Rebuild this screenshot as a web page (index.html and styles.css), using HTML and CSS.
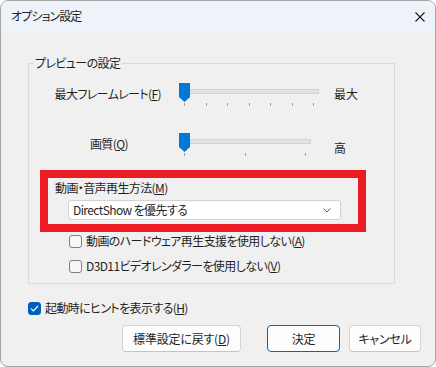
FILE: index.html
```html
<!DOCTYPE html>
<html lang="ja">
<head>
    <meta charset="UTF-8">
    <title>オプション設定</title>
    <link rel="stylesheet" href="styles.css">
</head>
<body>
    <div class="window">
        <div class="titlebar">
            <span class="title">オプション設定</span>
            <svg class="close" width="10" height="10" viewBox="0 0 10 10">
                <path d="M0.5 0.5 L9.5 9.5 M9.5 0.5 L0.5 9.5" stroke="#1b1b1b" stroke-width="1.1" fill="none"/>
            </svg>
        </div>

        <div class="content">
            <div class="group">
                <span class="group-title">プレビューの設定</span>

                <div class="slider-row">
                    <div class="slider-label">最大フレームレート(<u>F</u>)</div>
                    <div class="slider">
                        <div class="track track-long"></div>
                        <svg class="thumb" width="11" height="19" viewBox="0 0 11 19">
                            <path d="M0 0 H11 V14 L5.5 19 L0 14 Z" fill="#0078d7"/>
                        </svg>
                        <div class="ticks ticks-long">
                            <i></i><i></i><i></i><i></i><i></i><i></i><i></i>
                        </div>
                    </div>
                    <div class="slider-end">最大</div>
                </div>

                <div class="slider-row">
                    <div class="slider-label label-short">画質(<u>Q</u>)</div>
                    <div class="slider">
                        <div class="track track-short"></div>
                        <svg class="thumb" width="11" height="19" viewBox="0 0 11 19">
                            <path d="M0 0 H11 V14 L5.5 19 L0 14 Z" fill="#0078d7"/>
                        </svg>
                        <div class="ticks ticks-short">
                            <i></i><i></i><i></i>
                        </div>
                    </div>
                    <div class="slider-end end-low">高</div>
                </div>

                <div class="highlight">
                    <div class="combo-label">動画・音声再生方法(<u>M</u>)</div>
                    <div class="combo">
                        <span>DirectShow&nbsp;を優先する</span>
                        <svg width="8" height="5" viewBox="0 0 8 5">
                            <path d="M0.5 0.5 L4 4 L7.5 0.5" stroke="#5f5f5f" stroke-width="1" fill="none"/>
                        </svg>
                    </div>
                </div>

                <label class="check check-first">
                    <span class="box"></span>
                    <span>動画のハードウェア再生支援を使用しない(<u>A</u>)</span>
                </label>
                <label class="check check-second">
                    <span class="box"></span>
                    <span>D3D11ビデオレンダラーを使用しない(<u>V</u>)</span>
                </label>
            </div>

            <label class="check check-hint">
                <span class="box box-on">
                    <svg width="9" height="7" viewBox="0 0 9 7">
                        <path d="M1 3.6 L3.4 6 L8 1" stroke="#fff" stroke-width="1.2" fill="none"/>
                    </svg>
                </span>
                <span>起動時にヒントを表示する(<u>H</u>)</span>
            </label>

            <div class="buttons">
                <button class="btn btn-reset">標準設定に戻す(<u>D</u>)</button>
                <button class="btn btn-default">決定</button>
                <button class="btn btn-cancel">キャンセル</button>
            </div>
        </div>
    </div>
</body>
</html>
```

FILE: styles.css
```css
* {
    margin: 0;
    padding: 0;
    box-sizing: border-box;
}

body {
    background: #ffffff;
    font-family: "Noto Sans CJK JP", "Noto Sans", sans-serif;
    font-feature-settings: "palt";
    font-size: 12px;
    line-height: 16px;
    letter-spacing: -0.6px;
    color: #1f1f1f;
}

u {
    text-decoration: underline;
    text-underline-offset: 1px;
}

.window {
    width: 436px;
    height: 367px;
    border: 1px solid #a3a3a3;
    border-radius: 8px;
    background: #f0f0f0;
    overflow: hidden;
}

.titlebar {
    height: 30px;
    background: #eef2f9;
    display: flex;
    align-items: center;
    justify-content: space-between;
    padding: 0 10px 0 10px;
}

.title {
    font-size: 12px;
    letter-spacing: -0.9px;
}

.close {
    margin-top: 1px;
}

.content {
    padding: 0 14px 0 27px;
}

/* group box */

.group {
    position: relative;
    margin-top: 32px;
    width: 367px;
    border: 1px solid #dadada;
    padding: 19px 0 9px 0;
}

.group-title {
    position: absolute;
    top: -9px;
    left: 5px;
    padding: 0 2px 0 1px;
    background: #f0f0f0;
}

.slider-row {
    display: flex;
    height: 24px;
}

.slider-row + .slider-row {
    margin-top: 26px;
}

.slider-label {
    width: 132px;
    text-align: right;
    padding-top: 3px;
}

.label-short {
    padding-right: 33px;
}

.slider {
    position: relative;
    width: 155px;
    margin-left: 18px;
}

.track {
    margin-top: 6px;
    margin-left: 1px;
    height: 5px;
    background: #e3e3e3;
    border: 1px solid #d3d3d3;
}

.track-long {
    width: 139px;
}

.track-short {
    width: 131px;
}

.thumb {
    position: absolute;
    left: 0;
    top: 0;
}

.ticks {
    display: flex;
    justify-content: space-between;
    margin-top: 9px;
    margin-left: 5px;
}

.ticks i {
    display: block;
    width: 1px;
    height: 3px;
    background: #9f9f9f;
}

.ticks-long {
    width: 130px;
}

.ticks-short {
    width: 122px;
}

.slider-end {
    padding-top: 3px;
    letter-spacing: 0;
}

.end-low {
    padding-top: 7px;
}

/* red highlight around the combo */

.highlight {
    margin: 13px 0 0 11px;
    width: 326px;
    border: 8px solid #ed1c24;
    padding: 2px 0 4px 7px;
}

.combo {
    margin: 4px 0 0 13px;
    width: 273px;
    height: 20px;
    background: #ffffff;
    border: 1px solid #d2d2d2;
    border-radius: 3px;
    display: flex;
    align-items: center;
    justify-content: space-between;
    padding: 0 9px 0 4px;
}

/* checkboxes */

.check {
    display: flex;
    align-items: center;
    gap: 4px;
    height: 16px;
}

.check-first {
    margin: 1px 0 0 40px;
}

.check-second {
    margin: 9px 0 0 40px;
}

.check-hint {
    margin-top: 16px;
    margin-left: 0;
}

.box {
    width: 13px;
    height: 13px;
    border: 1px solid #7f7f7f;
    border-radius: 3px;
    background: #f7f7f7;
    display: flex;
    align-items: center;
    justify-content: center;
}

.box-on {
    background: #005fb8;
    border-color: #005fb8;
}

/* buttons */

.buttons {
    display: flex;
    justify-content: flex-end;
    margin-top: 9px;
}

.btn {
    height: 27px;
    font-family: inherit;
    font-feature-settings: "palt";
    font-size: 12px;
    letter-spacing: -0.2px;
    color: #1f1f1f;
    background: #fdfdfd;
    border: 1px solid #d4d4d4;
    border-bottom-color: #c4c4c4;
    border-radius: 4px;
}

.btn-reset {
    width: 119px;
}

.btn-default {
    width: 73px;
    margin-left: 26px;
    border: 1px solid #0067c0;
}

.btn-cancel {
    width: 72px;
    margin-left: 9px;
}
```
